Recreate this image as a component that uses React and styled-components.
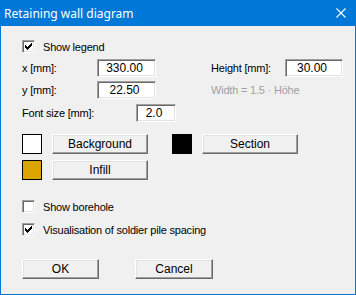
import React from 'react';
import styled, {createGlobalStyle} from 'styled-components';

const GlobalStyle = createGlobalStyle`
  html, body {
    margin: 0;
    padding: 0;
    background: #f0f0f0;
  }
`

const Window = styled.div`
  width: 356px;
  height: 295px;
  box-sizing: border-box;
  border: 1px solid #0078d7;
  border-top: none;
  background: #f0f0f0;
  display: flex;
  flex-direction: column;
  font-family: "Liberation Sans", Arial, sans-serif;
  font-size: 11px;
  letter-spacing: -0.2px;
  color: #000;
`

const TitleBar = styled.div`
  height: 26px;
  margin: 0 -1px;
  background: #0078d7;
  color: #fff;
  display: flex;
  align-items: center;
  justify-content: space-between;
  padding: 0 10px 0 4px;
  font-family: "Noto Sans", "Open Sans", sans-serif;
  font-size: 12px;
  letter-spacing: 0;
`

const Content = styled.div`
  padding-left: 21px;
  display: flex;
  flex-direction: column;
`

const Row = styled.div`
  display: flex;
  align-items: center;
  height: ${p => p.$h || 18}px;
  margin-top: ${p => p.$top}px;
`

const Label = styled.span`
  width: ${p => p.$w}px;
  flex-shrink: 0;
  color: ${p => (p.$muted ? '#a0a0a0' : '#000')};
`

const Group = styled.div`
  display: flex;
  align-items: center;
  width: ${p => p.$w}px;
  flex-shrink: 0;
`

const Input = styled.div`
  width: ${p => p.$w}px;
  height: 18px;
  box-sizing: border-box;
  background: #fff;
  border-top: 1px solid #a0a0a0;
  border-left: 1px solid #a0a0a0;
  border-right: 1px solid #fff;
  border-bottom: 1px solid #fff;
  box-shadow: inset 1px 1px 0 #696969, inset -1px -1px 0 #e3e3e3;
  display: flex;
  align-items: center;
  justify-content: center;
  padding-right: 4px;
  font-size: 12px;
  letter-spacing: 0;
`

const CheckRow = styled.label`
  display: flex;
  align-items: center;
  height: 13px;
  margin-top: ${p => p.$top}px;
`

const Box = styled.span`
  width: 13px;
  height: 13px;
  box-sizing: border-box;
  background: #fff;
  border-top: 1px solid #a0a0a0;
  border-left: 1px solid #a0a0a0;
  border-right: 1px solid #fff;
  border-bottom: 1px solid #fff;
  box-shadow: inset 1px 1px 0 #696969, inset -1px -1px 0 #e3e3e3;
  display: flex;
  align-items: center;
  justify-content: center;
  margin-right: 8px;
`

const Swatch = styled.span`
  width: 20px;
  height: 20px;
  box-sizing: border-box;
  border: 1px solid #000;
  background: ${p => p.$color};
  margin-right: 10px;
  flex-shrink: 0;
`

const Button = styled.button`
  width: ${p => p.$w || 96}px;
  height: 20px;
  box-sizing: border-box;
  padding: 0;
  background: #f0f0f0;
  font-family: "Liberation Sans", Arial, sans-serif;
  font-size: 12px;
  color: #000;
  border-top: 1px solid #fff;
  border-left: 1px solid #fff;
  border-right: 1px solid #696969;
  border-bottom: 1px solid #696969;
  box-shadow: inset -1px -1px 0 #a0a0a0, inset 1px 1px 0 #e3e3e3;
  flex-shrink: 0;
  margin-right: ${p => p.$mr || 0}px;
`

function Check() {
    return (
        <svg width="7" height="7" viewBox="0 0 7 7" shapeRendering="crispEdges">
            <path d="M6 0h1v3h-1zM5 1h1v3h-1zM4 2h1v3h-1zM3 3h1v3h-1zM2 4h1v3h-1zM1 3h1v3h-1zM0 2h1v3h-1z" fill="#000"/>
        </svg>
    );
}

function CheckBox({checked, label, top}) {
    return (
        <CheckRow $top={top}>
            <Box>{checked ? <Check/> : null}</Box>
            <span>{label}</span>
        </CheckRow>
    );
}

export default function App() {
    return (
        <Window>
            <GlobalStyle/>
            <TitleBar>
                <span>Retaining wall diagram</span>
                <svg width="10" height="10" viewBox="0 0 10 10">
                    <path d="M0.5 0.5L9.5 9.5M9.5 0.5L0.5 9.5" stroke="#fff" strokeWidth="1.1"/>
                </svg>
            </TitleBar>
            <Content>
                <CheckBox checked label="Show legend" top={14}/>

                <Row $top={6}>
                    <Group $w={189}>
                        <Label $w={75}>x [mm]:</Label>
                        <Input $w={59}>330.00</Input>
                    </Group>
                    <Label $w={74}>Height [mm]:</Label>
                    <Input $w={58}>30.00</Input>
                </Row>
                <Row $top={4}>
                    <Group $w={189}>
                        <Label $w={75}>y [mm]:</Label>
                        <Input $w={59}>22.50</Input>
                    </Group>
                    <Label $w={140} $muted>Width = 1.5 · Höhe</Label>
                </Row>
                <Row $top={5}>
                    <Label $w={114}>Font size [mm]:</Label>
                    <Input $w={40}>2.0</Input>
                </Row>

                <Row $top={12} $h={20}>
                    <Swatch $color="#fff"/>
                    <Button $mr={24}>Background</Button>
                    <Swatch $color="#000"/>
                    <Button>Section</Button>
                </Row>
                <Row $top={6} $h={20}>
                    <Swatch $color="#dba400"/>
                    <Button>Infill</Button>
                </Row>

                <CheckBox label="Show borehole" top={20}/>
                <CheckBox checked label="Visualisation of soldier pile spacing" top={10}/>

                <Row $top={23} $h={20}>
                    <Button $w={77} $mr={36}>OK</Button>
                    <Button $w={78}>Cancel</Button>
                </Row>
            </Content>
        </Window>
    );
}
